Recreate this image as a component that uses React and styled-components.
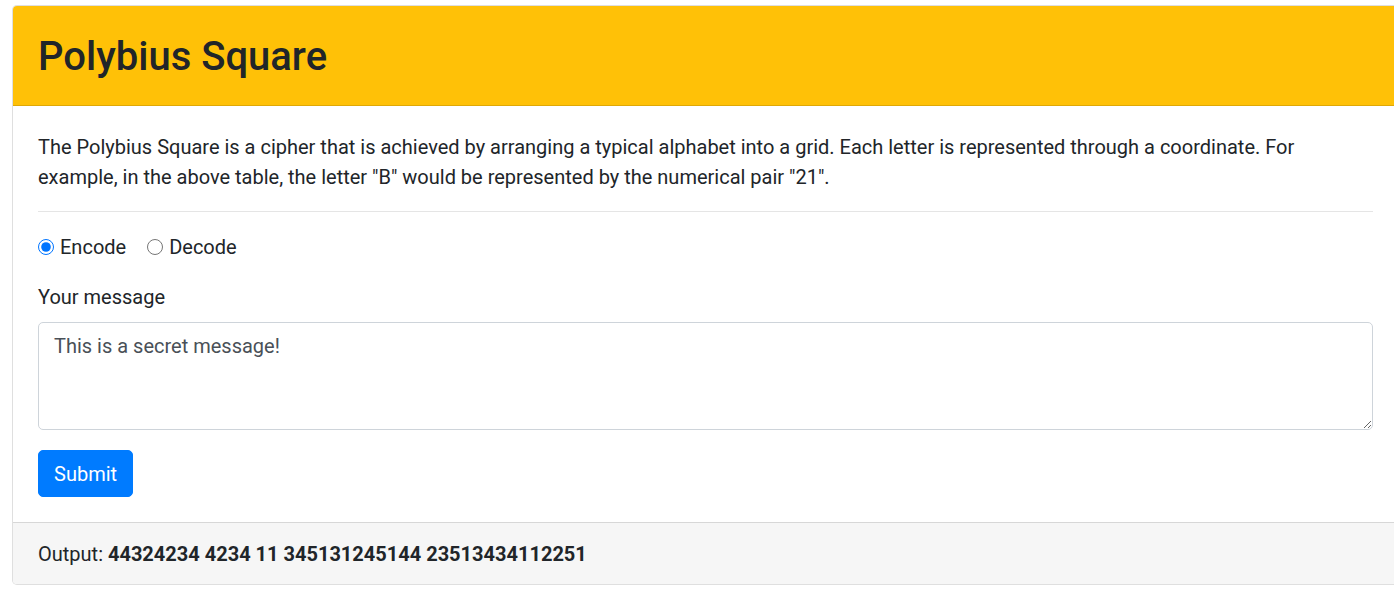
import React, { useState } from "react";
import styled, { createGlobalStyle } from "styled-components";

const GlobalStyle = createGlobalStyle`
  html, body {
    margin: 0;
    padding: 0;
    overflow: hidden;
    background: #fff;
  }
  body {
    font-family: Roboto, "Noto Sans", "Liberation Sans", sans-serif;
    font-size: 20px;
    line-height: 30px;
    color: #212529;
  }
  * { box-sizing: border-box; }
`;

const Page = styled.div`
  padding: 5px 0 0 12px;
  width: 1400px;
`;

const Card = styled.section`
  width: 1387px;
  display: flex;
  flex-direction: column;
  border: 1px solid rgba(0, 0, 0, 0.125);
  border-radius: 5px;
  background: #fff;
`;

const CardHeader = styled.header`
  background: #ffc107;
  border-bottom: 1px solid rgba(0, 0, 0, 0.125);
  border-radius: 4px 4px 0 0;
  padding: 27px 25px 24px;
`;

const Title = styled.h2`
  margin: 0;
  font-size: 40px;
  line-height: 48px;
  font-weight: 500;
  color: #212529;
`;

const CardBody = styled.div`
  padding: 25px;
  display: flex;
  flex-direction: column;
`;

const Lead = styled.p`
  margin: 0;
  padding-top: 1px;
  margin-bottom: -1px;
`;

const Rule = styled.hr`
  margin: 20px 0;
  border: 0;
  border-top: 1px solid rgba(0, 0, 0, 0.1);
`;

const RadioRow = styled.div`
  display: flex;
  align-items: center;
  gap: 21px;
  margin-bottom: 20px;
`;

const RadioLabel = styled.label`
  display: inline-flex;
  align-items: center;
  gap: 6px;
  cursor: pointer;
`;

const Radio = styled.input.attrs({ type: "radio" })`
  width: 16px;
  height: 16px;
  margin: 0;
  accent-color: #0075ff;
`;

const FieldLabel = styled.label`
  display: block;
  margin-bottom: 10px;
`;

const Field = styled.div`
  display: flex;
  flex-direction: column;
  margin-bottom: 20px;
`;

const TextArea = styled.textarea`
  width: 100%;
  height: 108px;
  padding: 7.5px 15px;
  font: inherit;
  line-height: 30px;
  color: #495057;
  border: 1px solid #ced4da;
  border-radius: 5px;
  background: #fff;
  outline: none;
  resize: vertical;
`;

const SubmitButton = styled.button`
  align-self: flex-start;
  font: inherit;
  line-height: 30px;
  padding: 7.5px 15px;
  color: #fff;
  background: #007bff;
  border: 1px solid #007bff;
  border-radius: 5px;
  cursor: pointer;
`;

const CardFooter = styled.footer`
  background: #f6f6f6;
  border-top: 1px solid rgba(0, 0, 0, 0.125);
  border-radius: 0 0 4px 4px;
  padding: 16px 25px 15px;
`;

const Strong = styled.strong`
  font-weight: 700;
`;

export default function App() {
  const [mode, setMode] = useState("encode");
  const [msg, setMsg] = useState("This is a secret message!");
  return (
    <>
      <GlobalStyle />
      <Page>
        <Card>
          <CardHeader>
            <Title>Polybius Square</Title>
          </CardHeader>
          <CardBody>
            <Lead>
              The Polybius Square is a cipher that is achieved by arranging a typical alphabet into a grid. Each
              letter is represented through a coordinate. For example, in the above table, the letter "B" would be
              represented by the numerical pair "21".
            </Lead>
            <Rule />
            <RadioRow>
              <RadioLabel>
                <Radio name="mode" checked={mode === "encode"} onChange={() => setMode("encode")} />
                Encode
              </RadioLabel>
              <RadioLabel>
                <Radio name="mode" checked={mode === "decode"} onChange={() => setMode("decode")} />
                Decode
              </RadioLabel>
            </RadioRow>
            <Field>
              <FieldLabel htmlFor="msg">Your message</FieldLabel>
              <TextArea id="msg" rows={3} value={msg} onChange={(e) => setMsg(e.target.value)} />
            </Field>
            <SubmitButton type="button">Submit</SubmitButton>
          </CardBody>
          <CardFooter>
            Output: <Strong>44324234 4234 11 345131245144 23513434112251</Strong>
          </CardFooter>
        </Card>
      </Page>
    </>
  );
}
